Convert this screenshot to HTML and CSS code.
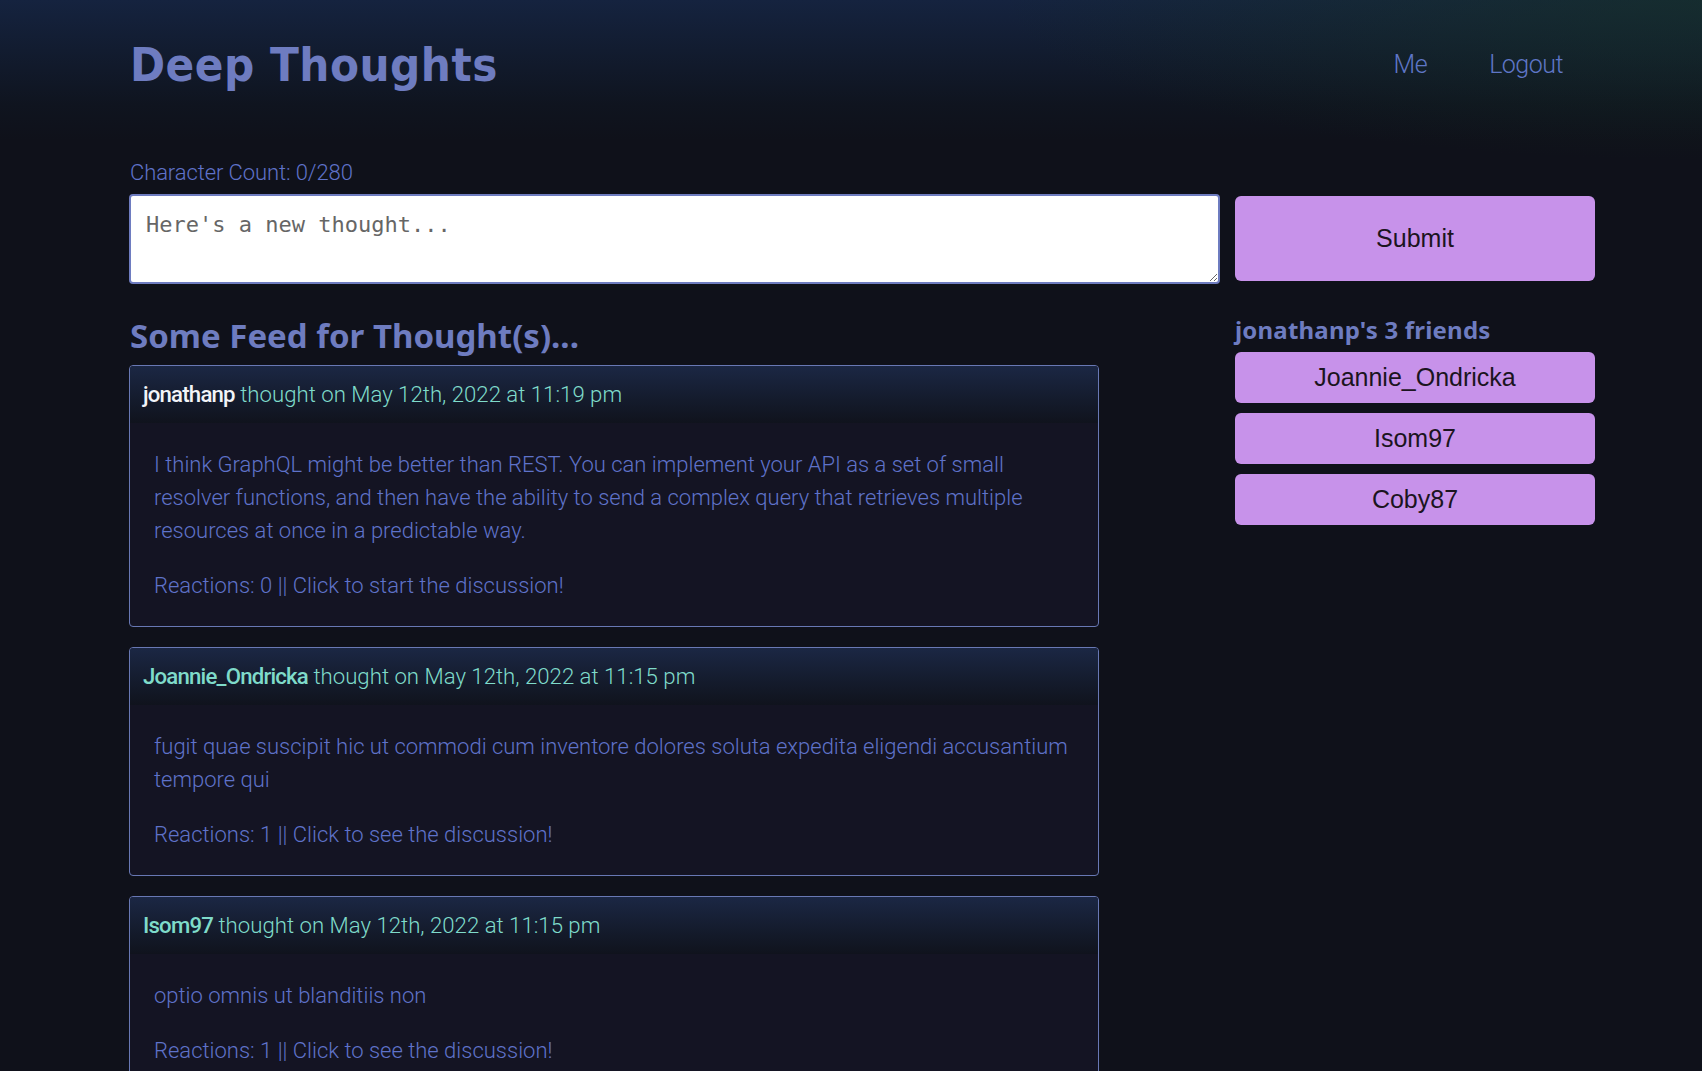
FILE: index.html
```html
<!DOCTYPE html>
<html lang="en">
<head>
<meta charset="utf-8">
<title>Deep Thoughts</title>
<link rel="stylesheet" href="styles.css">
</head>
<body>
<header class="site-header">
  <h1 class="brand">Deep Thoughts</h1>
  <nav class="nav">
    <a class="nav-link" href="#">Me</a>
    <a class="nav-link" href="#">Logout</a>
  </nav>
</header>
<main class="main">
  <section class="compose">
    <p class="char-count">Character Count: 0/280</p>
    <form class="compose-form">
      <textarea class="compose-input" placeholder="Here's a new thought..."></textarea>
      <button class="btn btn-submit" type="button">Submit</button>
    </form>
  </section>
  <div class="content">
    <section class="feed">
      <h2 class="feed-title">Some Feed for Thought(s)...</h2>
      <article class="card">
        <div class="card-header"><span class="user user-self">jonathanp</span> thought on May 12th, 2022 at 11:19 pm</div>
        <div class="card-body">
          <p class="card-text">I think GraphQL might be better than REST. You can implement your API as a set of small resolver functions, and then have the ability to send a complex query that retrieves multiple resources at once in a predictable way.</p>
          <p class="card-text">Reactions: 0 || Click to start the discussion!</p>
        </div>
      </article>
      <article class="card">
        <div class="card-header"><span class="user">Joannie_Ondricka</span> thought on May 12th, 2022 at 11:15 pm</div>
        <div class="card-body">
          <p class="card-text">fugit quae suscipit hic ut commodi cum inventore dolores soluta expedita eligendi accusantium tempore qui</p>
          <p class="card-text">Reactions: 1 || Click to see the discussion!</p>
        </div>
      </article>
      <article class="card">
        <div class="card-header"><span class="user">Isom97</span> thought on May 12th, 2022 at 11:15 pm</div>
        <div class="card-body">
          <p class="card-text">optio omnis ut blanditiis non</p>
          <p class="card-text">Reactions: 1 || Click to see the discussion!</p>
        </div>
      </article>
    </section>
    <aside class="friends">
      <h3 class="friends-title">jonathanp's 3 friends</h3>
      <button class="btn btn-friend" type="button">Joannie_Ondricka</button>
      <button class="btn btn-friend" type="button">Isom97</button>
      <button class="btn btn-friend" type="button">Coby87</button>
    </aside>
  </div>
</main>
</body>
</html>
```
FILE: styles.css
```css
* { box-sizing: border-box; }

html, body {
  margin: 0;
  font-family: Roboto, "Liberation Sans", sans-serif;
  font-weight: 300;
  color: #5f72c9;
  overflow: hidden;
}

body {
  min-height: 1071px;
  background:
    radial-gradient(ellipse 700px 160px at 100% 0%, rgba(22, 52, 34, 0.55), rgba(22, 52, 34, 0) 100%),
    linear-gradient(180deg, #15233f 0px, #121c30 50px, #0f141f 105px, #0f111a 140px, #0f111a 100%);
}

.site-header {
  display: flex;
  align-items: center;
  justify-content: space-between;
  height: 128px;
  padding: 0 139px 0 130px;
}

.brand {
  margin: 0;
  font-family: "DejaVu Sans", sans-serif;
  font-stretch: condensed;
  font-weight: 700;
  font-size: 47px;
  letter-spacing: 0.5px;
  color: #6e7cc0;
}

.nav {
  display: flex;
  gap: 62px;
}

.nav-link {
  color: #5f76c6;
  text-decoration: none;
  font-size: 25px;
  font-weight: 300;
  letter-spacing: -0.5px;
}

.main {
  padding: 32px 107px 0 129px;
}

.char-count {
  margin: 0 0 9px 1px;
  font-size: 22px;
  letter-spacing: -0.1px;
  color: #5f72c9;
}

.compose-form {
  display: flex;
  gap: 15px;
  align-items: flex-start;
}

.compose-input {
  flex: 1;
  height: 90px;
  border: 2px solid #6e7cc0;
  border-radius: 4px;
  background: #fff;
  padding: 16px 15px;
  font-family: "DejaVu Sans Mono", monospace;
  font-size: 22px;
  color: #333;
}

.compose-input::placeholder {
  color: #666;
}

.btn {
  border: none;
  background: #c792ea;
  color: #1b1420;
  font-family: "Liberation Sans", Arial, sans-serif;
  font-weight: 400;
  border-radius: 6px;
  width: 360px;
}

.btn-submit {
  margin-top: 2px;
  height: 85px;
  font-size: 25px;
}

.content {
  display: flex;
  justify-content: space-between;
  align-items: flex-start;
  margin-top: 32px;
}

.feed {
  width: 970px;
}

.feed-title {
  margin: 0 0 9px 1px;
  font-family: "Noto Sans", sans-serif;
  font-weight: 700;
  font-size: 33px;
  letter-spacing: 0;
  color: #6e7cc0;
  line-height: 1.2;
}

.card {
  border: 1px solid #6878b4;
  border-radius: 4px;
  background: #141423;
  margin-bottom: 20px;
  overflow: hidden;
}

.card-header {
  height: 57px;
  display: flex;
  align-items: center;
  padding: 0 13px;
  font-size: 22.2px;
  letter-spacing: 0;
  color: #7fdbca;
  background: linear-gradient(180deg, #1b2744 0%, #141b2c 60%, #10131d 100%);
  white-space: pre;
}

.user {
  font-weight: 500;
  color: #7fdbca;
  letter-spacing: -0.8px;
}

.user-self {
  color: #f2f4f8;
}

.card-body {
  padding: 25px 24px 24px;
}

.card-text {
  margin: 0 0 22px;
  font-size: 22px;
  line-height: 33px;
  letter-spacing: 0;
  color: #5f72c9;
}

.card-text:last-child {
  margin-bottom: 0;
}

.friends {
  width: 360px;
  display: flex;
  flex-direction: column;
  gap: 10px;
}

.friends-title {
  margin: 0 0 -3px;
  font-family: "Noto Sans", sans-serif;
  font-weight: 700;
  font-size: 24px;
  letter-spacing: 0.2px;
  color: #6e7cc0;
  line-height: 1.2;
}

.btn-friend {
  height: 51px;
  font-size: 25px;
}
```
